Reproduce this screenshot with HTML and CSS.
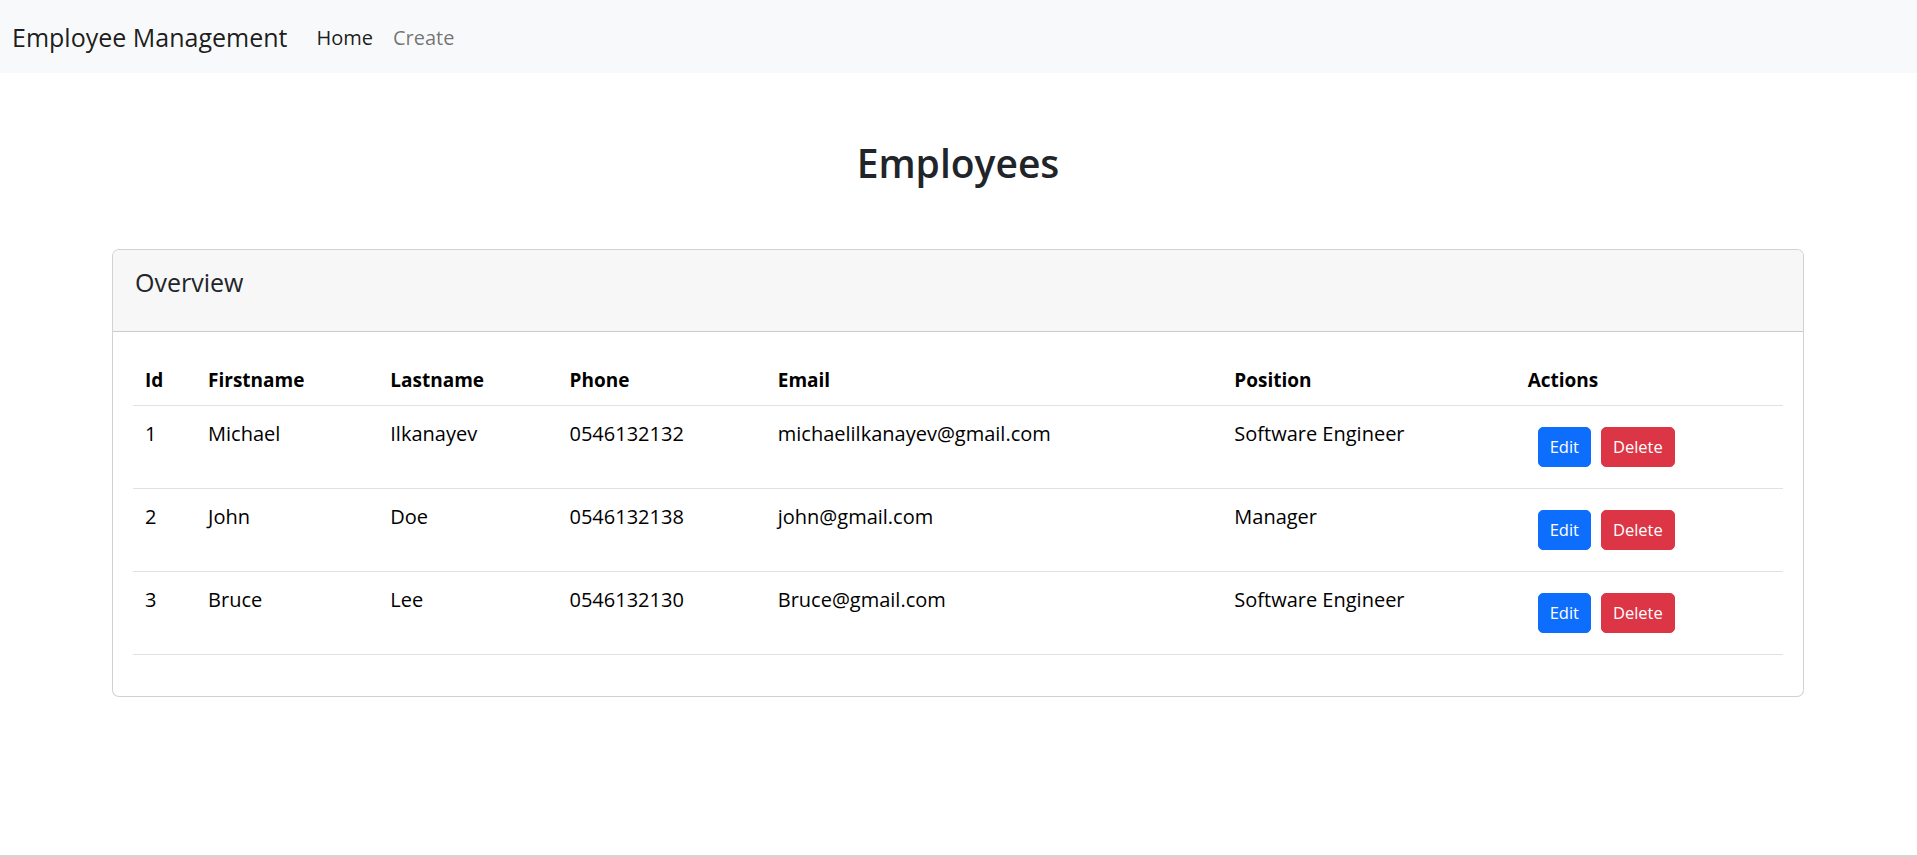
FILE: index.html
```html
<!DOCTYPE html>
<html lang="en">
<head>
<meta charset="utf-8">
<title>Employee Management</title>
<link rel="stylesheet" href="styles.css">
</head>
<body>
<nav class="navbar">
  <a class="brand" href="#">Employee Management</a>
  <ul class="nav">
    <li><a class="nav-link active" href="#">Home</a></li>
    <li><a class="nav-link" href="#">Create</a></li>
  </ul>
</nav>
<main class="container">
  <h1 class="title">Employees</h1>
  <section class="card">
    <div class="card-header"><h4 class="card-title">Overview</h4></div>
    <div class="card-body">
      <table class="table">
        <colgroup>
          <col class="c-id"><col class="c-first"><col class="c-last"><col class="c-phone"><col class="c-email"><col class="c-pos"><col class="c-act">
        </colgroup>
        <thead>
          <tr><th>Id</th><th>Firstname</th><th>Lastname</th><th>Phone</th><th>Email</th><th>Position</th><th>Actions</th></tr>
        </thead>
        <tbody>
          <tr><td>1</td><td>Michael</td><td>Ilkanayev</td><td>0546132132</td><td>michaelilkanayev@gmail.com</td><td>Software Engineer</td><td class="actions"><button class="btn btn-primary">Edit</button><button class="btn btn-danger">Delete</button></td></tr>
          <tr><td>2</td><td>John</td><td>Doe</td><td>0546132138</td><td>john@gmail.com</td><td>Manager</td><td class="actions"><button class="btn btn-primary">Edit</button><button class="btn btn-danger">Delete</button></td></tr>
          <tr><td>3</td><td>Bruce</td><td>Lee</td><td>0546132130</td><td>Bruce@gmail.com</td><td>Software Engineer</td><td class="actions"><button class="btn btn-primary">Edit</button><button class="btn btn-danger">Delete</button></td></tr>
        </tbody>
      </table>
    </div>
  </section>
</main>
<div class="window-edge"></div>
</body>
</html>
```

FILE: styles.css
```css
* { box-sizing: border-box; }
html, body { margin: 0; padding: 0; }
body {
  font-family: "Open Sans", "Noto Sans", sans-serif;
  font-size: 20px;
  line-height: 1.5;
  color: #212529;
  background: #fff;
}
.navbar {
  height: 73px;
  background: #f8f9fa;
  display: flex;
  align-items: center;
  padding: 3px 12px 0;
}
.brand {
  font-size: 25px;
  color: rgba(0,0,0,.9);
  text-decoration: none;
  margin-right: 19px;
  line-height: 1.5;
}
.nav {
  list-style: none;
  margin: 0;
  padding: 0;
  display: flex;
}
.nav-link {
  display: block;
  padding: 0 10px;
  font-size: 20px;
  color: rgba(0,0,0,.55);
  text-decoration: none;
}
.nav-link.active { color: rgba(0,0,0,.9); }

.container {
  padding: 0 113px 0 112px;
}
.title {
  margin: 67px 0 62px;
  text-align: center;
  font-size: 39px;
  font-weight: 600;
  line-height: 1.2;
  color: #212529;
}
.card {
  border: 1px solid rgba(0,0,0,.175);
  border-radius: 7px;
  overflow: hidden;
  background: #fff;
}
.card-header {
  background: #f7f7f7;
  border-bottom: 1px solid rgba(0,0,0,.175);
  height: 82px;
  padding: 14px 22px 0;
}
.card-title {
  margin: 0;
  font-size: 25px;
  font-weight: 400;
  line-height: 1.5;
  color: #212529;
}
.card-body {
  padding: 20px 20px 41px;
}
.table {
  width: 100%;
  border-collapse: collapse;
  table-layout: fixed;
  color: #000;
  vertical-align: top;
}
.c-id { width: 63px; }
.c-first { width: 182px; }
.c-last { width: 179px; }
.c-phone { width: 208px; }
.c-email { width: 456px; }
.c-pos { width: 293px; }
.c-act { width: 267px; }
.table th, .table td {
  text-align: left;
  border-bottom: 1px solid #dee2e6;
  vertical-align: top;
  white-space: nowrap;
}
.table th {
  font-weight: 700;
  font-size: 19px;
  padding: 14px 12px 11px;
}
.table td {
  font-size: 20px;
  padding: 13px 12px 9px;
}
.table td.actions {
  vertical-align: middle;
  line-height: 0;
  padding: 11px 12px;
}
.btn {
  display: inline-block;
  vertical-align: middle;
  font-family: inherit;
  font-size: 16.5px;
  line-height: 26px;
  height: 40px;
  padding: 6px 11px;
  border: 1px solid transparent;
  border-radius: 5px;
  color: #fff;
  margin: 10px 0 10px 10px;
  cursor: pointer;
}
.btn-primary { background: #0d6efd; border-color: #0d6efd; }
.btn-danger { background: #dc3545; border-color: #dc3545; }
.window-edge {
  position: fixed;
  left: 0;
  right: 0;
  bottom: 0;
  height: 2px;
  background: #d4d4d4;
}
```
